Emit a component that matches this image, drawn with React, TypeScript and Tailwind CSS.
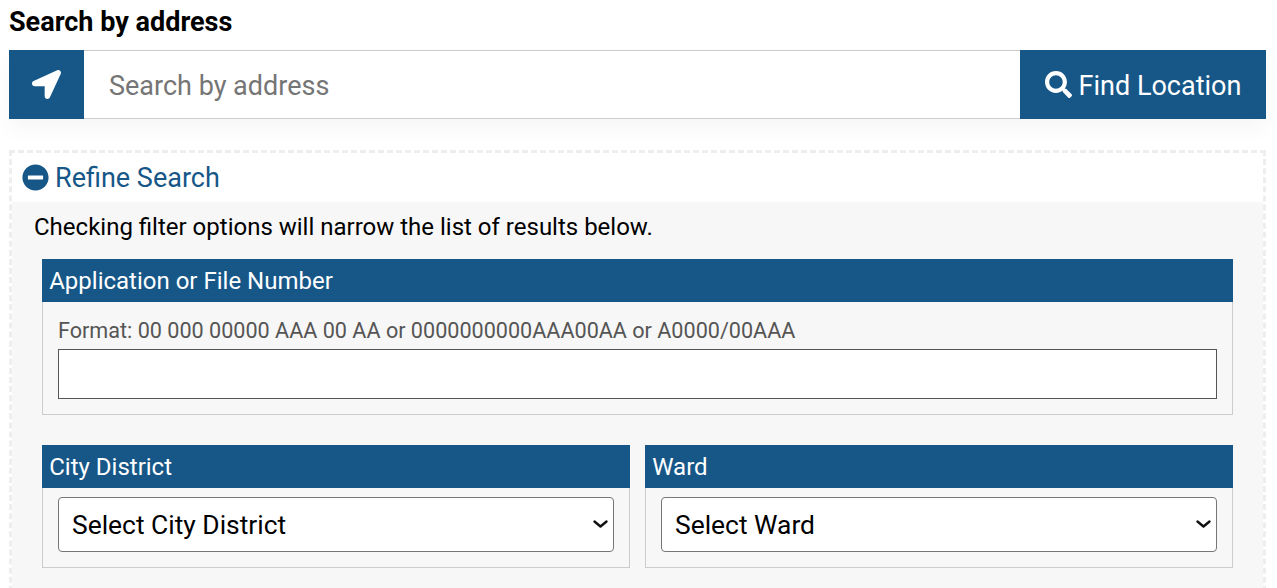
import { FaLocationArrow, FaSearch, FaMinusCircle } from "react-icons/fa";

const Panel = ({ title, children }: { title: string; children: React.ReactNode }) => (
  <div className="flex-1 min-w-0">
    <div className="h-[43px] bg-[#165788] text-white text-[24px] leading-[44px] pl-[7.2px]">{title}</div>
    <div className="border border-t-0 border-[#cccccc] px-[15px]">{children}</div>
  </div>
);

const DropDown = ({ label }: { label: string }) => (
  <div className="relative pt-[9px] pb-[15px]">
    <select className="block w-full h-[55px] pl-[13px] pt-[2px] appearance-none bg-white border border-[#767676] rounded-[4px] text-[26.4px] text-black outline-none">
      <option>{label}</option>
    </select>
    <svg
      viewBox="0 0 16 10"
      className="absolute right-[5px] top-[31px] w-[16px] h-[10px] pointer-events-none"
      fill="none"
      stroke="#111111"
      strokeWidth="2.4"
      strokeLinecap="round"
      strokeLinejoin="round"
    >
      <path d="M1.5 2.5 L7.5 7.5 L13.5 2.5" />
    </svg>
  </div>
);

export default function App() {
  return (
    <div className="w-[1277px] h-[588px] overflow-hidden bg-white pl-[9px] pr-[11px] font-['Roboto',sans-serif]">
      <h2 className="h-[50px] pt-[5px] text-[27px] leading-[35px] font-bold text-black">Search by address</h2>

      <div className="flex h-[69px] shadow-[0_10px_20px_rgba(0,0,0,0.04)]">
        <button className="w-[75px] flex items-center justify-center bg-[#165788] text-white">
          <FaLocationArrow size={29} />
        </button>
        <input
          placeholder="Search by address"
          className="flex-1 min-w-0 border-y border-[#cccccc] pl-[25px] pt-[4px] text-[27px] text-black placeholder:text-[#757575] outline-none"
        />
        <button className="w-[246px] flex items-center justify-center gap-[7px] bg-[#165788] text-white text-[27px]">
          <FaSearch size={27} />
          <span className="pt-[3px]">Find Location</span>
        </button>
      </div>

      <div className="mt-[31px] h-[460px] border-[3px] border-dashed border-[#eeeeee]">
        <div className="h-[49px] flex items-center gap-[7px] pl-[10px] text-[#165788] text-[27px]">
          <FaMinusCircle size={27} />
          <span className="pt-[1px] -ml-[1px]">Refine Search</span>
        </div>
        <div className="h-full bg-[#f7f7f7] px-[30px] pt-[9px]">
          <p className="-ml-[8px] text-[24px] leading-[32px] text-black">
            Checking filter options will narrow the list of results below.
          </p>
          <div className="mt-[16px]">
            <Panel title="Application or File Number">
              <p className="pt-[17px] text-[21.6px] leading-[24px] text-[#555555]">
                Format: 00 000 00000 AAA 00 AA or 0000000000AAA00AA or A0000/00AAA
              </p>
              <input className="block w-full h-[50px] mt-[6px] mb-[15px] bg-white border border-[#555555] outline-none" />
            </Panel>
          </div>
          <div className="flex gap-[15px] mt-[30px]">
            <Panel title="City District">
              <DropDown label="Select City District" />
            </Panel>
            <Panel title="Ward">
              <DropDown label="Select Ward" />
            </Panel>
          </div>
        </div>
      </div>
    </div>
  );
}
